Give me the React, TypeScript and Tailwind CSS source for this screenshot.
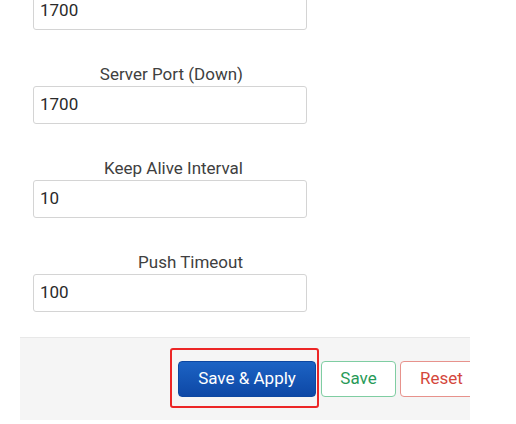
import React from "react";

const fields = [
  { label: "Server Port (Down)", value: "1700" },
  { label: "Keep Alive Interval", value: "10" },
  { label: "Push Timeout", value: "100" },
];

function Field({ value }: { value: string }) {
  return (
    <div className="flex h-[38px] w-[274px] items-center rounded-[3px] border border-[#d4d4d4] bg-white pl-[6px] text-[17px] text-[#2a2a2a]">
      {value}
    </div>
  );
}

export default function App() {
  return (
    <div
      className="h-[424px] w-[516px] overflow-hidden bg-white"
      style={{ fontFamily: "Roboto, 'Liberation Sans', sans-serif" }}
    >
      <div className="ml-[33px] mt-[-8px] flex w-[274px] flex-col">
        <Field value="1700" />
        {fields.map((f) => (
          <div key={f.label} className="mt-[32px] flex flex-col">
            <div className="h-[24px] pr-[64px] text-right text-[17px] leading-[24px] text-[#404040]">
              {f.label}
            </div>
            <Field value={f.value} />
          </div>
        ))}
      </div>
      <div className="ml-[20px] mt-[25px] flex h-[83px] w-[450px] items-start justify-start overflow-hidden border-t border-[#e8e8e8] bg-[#f5f5f5] pl-[158px] pt-[23px]">
        <div className="flex flex-nowrap items-center">
          <div className="relative">
            <div className="pointer-events-none absolute -bottom-[11px] -left-[8px] -right-[3px] -top-[13px] rounded-[3px] border-2 border-[#ec2626]" />
            <button className="h-[36px] w-[138px] whitespace-nowrap rounded-[4px] border border-[#0d47a1] bg-gradient-to-b from-[#1c63c4] to-[#0e48a6] text-[17px] text-white">
              Save &amp; Apply
            </button>
          </div>
          <button className="ml-[5px] h-[36px] w-[75px] shrink-0 rounded-[4px] border border-[#7fcda2] bg-white text-[17px] text-[#279a57]">
            Save
          </button>
          <button className="ml-[4px] h-[36px] w-[83px] shrink-0 rounded-[4px] border border-[#e7928c] bg-white text-[17px] text-[#d4473c]">
            Reset
          </button>
        </div>
      </div>
    </div>
  );
}
